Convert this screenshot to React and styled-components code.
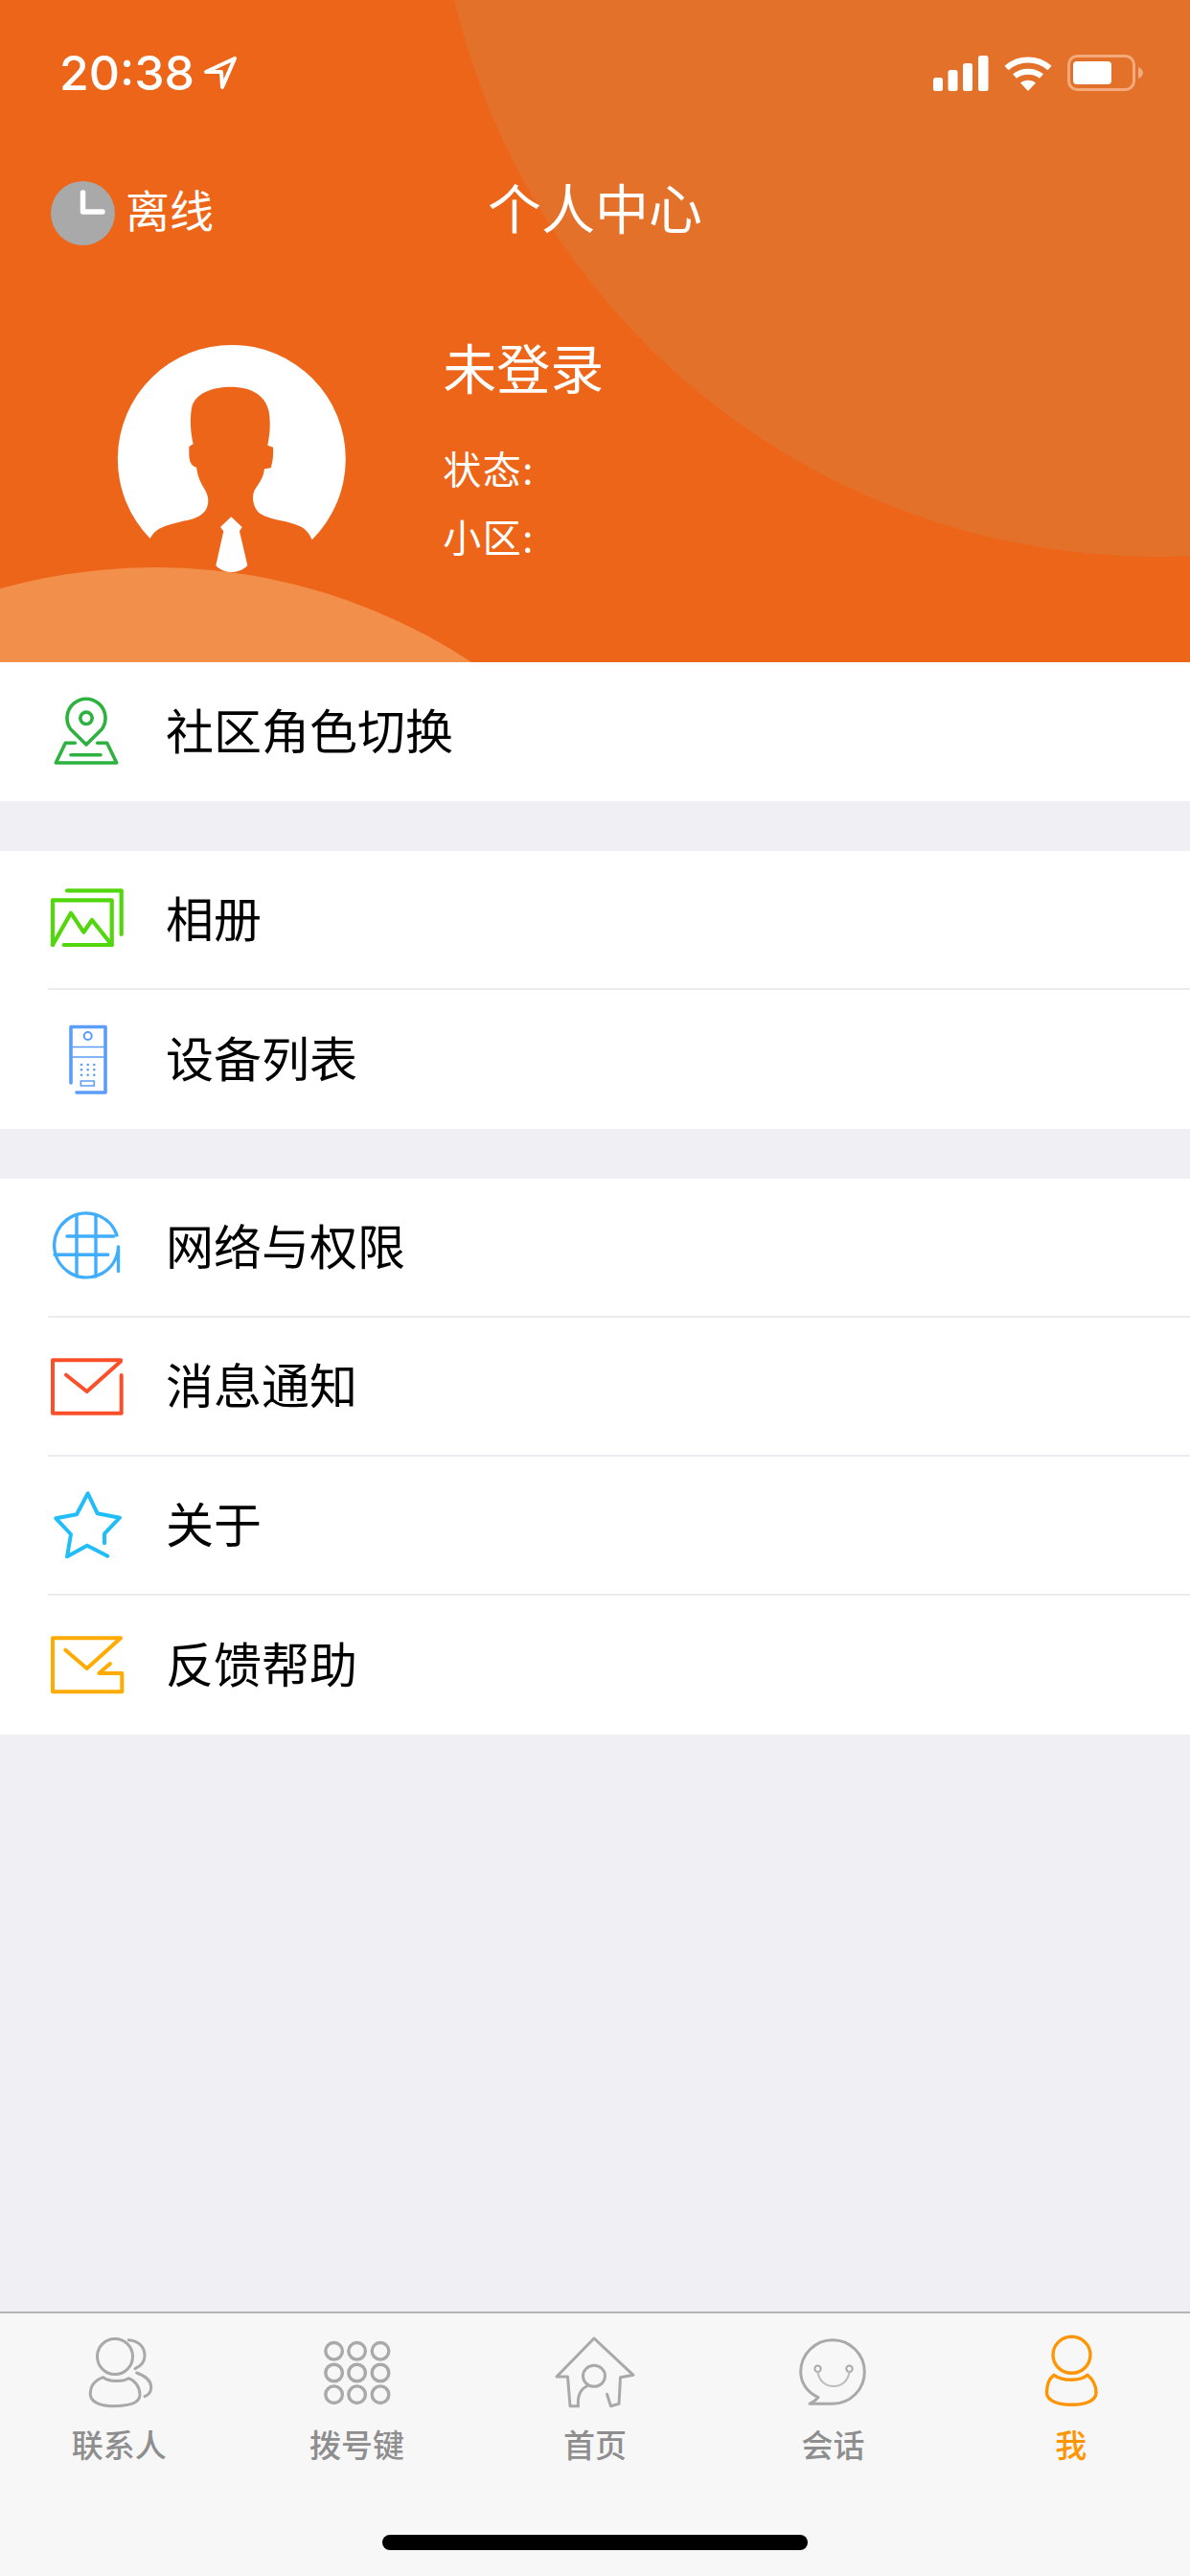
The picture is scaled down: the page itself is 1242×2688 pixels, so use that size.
import React from "react";
import styled, { createGlobalStyle } from "styled-components";

const Global = createGlobalStyle`
  html, body { margin: 0; padding: 0; background: #efeff4; }
  * { box-sizing: border-box; }
`;
const CJK = `"Noto Sans CJK SC", "Noto Sans", sans-serif`;

const Page = styled.div`
  width: 1242px; height: 2688px; display: flex; flex-direction: column;
  background: #efeff4; font-family: ${CJK}; position: relative; overflow: hidden;
`;
const Header = styled.header`
  position: relative; height: 691px; flex: none; background: #ed6519; overflow: hidden; color: #fff;
`;
const BigCircle = styled.div`
  position: absolute; left: 454px; top: -927px; width: 1508px; height: 1508px;
  border-radius: 50%; background: #e37129;
`;
const Hill = styled.div`
  position: absolute; left: -438px; top: 592px; width: 1200px; height: 1200px;
  border-radius: 50%; background: #f2904b;
`;
const StatusBar = styled.div`
  position: relative; height: 152px; display: flex; align-items: center; justify-content: space-between;
  padding: 0 49px 0 62px;
`;
const Time = styled.div`
  display: flex; align-items: center; gap: 10px;
  font: 500 50px "Inter", sans-serif;
`;
const StatusIcons = styled.div`
  display: flex; align-items: center; gap: 16px;
`;
const Nav = styled.div`
  position: relative; height: 140px; display: grid; grid-template-columns: 1fr auto 1fr;
  align-items: center; padding: 0 0 0 53px;
`;
const Presence = styled.div`
  display: flex; align-items: center; gap: 11px; font-size: 46px; line-height: 60px;
`;
const PresenceLabel = styled.span`
  margin-bottom: 10px;
`;
const Title = styled.h1`
  margin: 0 0 14px; font-size: 56px; font-weight: 400; line-height: 70px; padding-right: 53px;
`;
const Profile = styled.div`
  position: relative; display: flex; align-items: flex-start; gap: 99px; padding: 64px 0 0 120px;
`;
const Info = styled.div`
  display: flex; flex-direction: column; margin-top: -2px;
`;
const Name = styled.div`
  font-size: 56px; line-height: 56px; margin-bottom: 43px;
`;
const Meta = styled.div`
  font-size: 40px; line-height: 71px; letter-spacing: 1.5px;
`;
const Main = styled.main`
  flex: 1; display: flex; flex-direction: column; gap: 52px;
`;
const Group = styled.section`
  background: #fff;
`;
const Row = styled.div`
  height: 145px; margin-left: 50px; display: flex; align-items: center; gap: 43px;
  font-size: 50px; color: #000;
  &:not(:last-child) { border-bottom: 2px solid #ececee; }
`;
const RowLabel = styled.span`
  margin-bottom: 8px;
`;
const TabBar = styled.nav`
  height: 276px; flex: none; background: #f7f7f8; border-top: 2px solid #b4b4b6;
  display: grid; grid-template-columns: repeat(5, 1fr); padding-top: 22px;
`;
const Tab = styled.div`
  display: flex; flex-direction: column; align-items: center; gap: 14px;
  color: ${p => (p.$active ? "#ff9500" : "#8e8e8e")};
  font-size: 33px; line-height: 40px; font-weight: 500;
`;
const HomeBar = styled.div`
  position: absolute; left: 399px; bottom: 27px; width: 444px; height: 16px;
  border-radius: 8px; background: #000;
`;

const Ic = ({ color, w = 3.6, children, vb = "0 0 80 80", width = 80 }) => (
  <svg width={width} height="80" viewBox={vb} fill="none" stroke={color} strokeWidth={w}
    strokeLinecap="round" strokeLinejoin="round" style={{ flex: "none" }}>
    {children}
  </svg>
);

const IconCommunity = () => (
  <Ic color="#2db13f">
    <path d="M40 53 L23.800 37 A20 20 0 1 1 56.200 37 Z" />
    <circle cx="40" cy="25.3" r="6.2" />
    <path d="M28.3 51.3H18.3L8.3 72H71.7L61.7 51.3H51.7" />
    <path d="M24 63.7H55" />
  </Ic>
);
const IconAlbum = () => (
  <Ic color="#52d60c" w={4.2}>
    <path d="M20 9.3H76.7V55" />
    <path d="M5 66V19.3H66.7V66H16.7" />
    <path d="M5 66L24 32.7L37.3 52.7L46 40L66.7 66" />
  </Ic>
);
const IconDevice = () => (
  <Ic color="#5b9dfb" w={3.6}>
    <path d="M24 64V5.5H60V74H30" />
    <circle cx="41.7" cy="15" r="4" strokeWidth="2" />
    <path d="M24.5 26.5H59.5M26 37H58" strokeWidth="1.6" />
    <g fill="#5b9dfb" stroke="none">
      {[35, 41.7, 48.3].flatMap(x => [45, 50.3, 55.7].map(y => <circle key={x + "-" + y} cx={x} cy={y} r="1.3" />))}
    </g>
    <rect x="34.3" y="62" width="14" height="5" strokeWidth="1.6" />
  </Ic>
);
const IconGlobe = () => (
  <Ic color="#40aefc" w={3.4}>
    <path d="M72 27 A33.5 33.5 0 1 0 73 44 L73.5 39 V64.5" />
    <path d="M30 6.5V70M50 6.5V70M20 28H69M7 47.3H62.7" />
  </Ic>
);
const IconMail = () => (
  <Ic color="#fb4f2a" w={4}>
    <path d="M76.7 28V67.7H5V12.3H76" />
    <path d="M76 13.5L40.7 45L19 27.7" />
  </Ic>
);
const IconStar = () => (
  <Ic color="#21bdf9" w={4}>
    <path d="M59 58.3V48.3L75 31.7L51.7 27.3L41.7 6.3L30 28.3L8.3 32.3L24 49L20 72.3L41 60.7L62.3 71.7" />
  </Ic>
);
const IconFeedback = () => (
  <Ic color="#ffab00" w={4}>
    <path d="M65 38L53.3 48H77.3V67.3H5V11.3H76L40.7 43L18.3 23.7" />
  </Ic>
);

const TabContacts = () => (
  <Ic color="#a9a9a9" w={3} width={82} vb="-1 0 82 80">
    <circle cx="36" cy="23" r="18.5" />
    <path d="M50.3 5.7C62 7 67 14 67 22.3C67 28 63 33 57 35.7" />
    <path d="M23.7 44.7C14 48 10 55 10.3 63C11 71 22 74.7 33.7 74.7C48 74.7 62 72 62 63C62 55 57 48 50.3 45.7C44 49.5 30 49.5 23.7 44.7Z" />
    <path d="M58.7 40C67 43 73.7 48 73.7 55C73.7 59 71 63 67 64.7" />
  </Ic>
);
const TabKeypad = () => (
  <Ic color="#a9a9a9" w={3.4} width={82} vb="-0.6 0 82 80">
    {[16, 40, 64.4].flatMap(x => [17.3, 40, 62.7].map(y => <circle key={x + "-" + y} cx={x} cy={y} r="8.8" />))}
  </Ic>
);
const TabHome = () => (
  <Ic color="#a9a9a9" w={3} width={84} vb="-1 0 84 80">
    <path d="M23.5 74.7H15L12.5 44H1L40 4L81 42.3L67.5 44.7L66 72.3L57.5 74.7L53.5 62.3" />
    <ellipse cx="40" cy="43.3" rx="11.5" ry="11" />
    <path d="M32.5 54C26 57 22.5 63 23.5 74.7" />
  </Ic>
);
const TabChat = () => (
  <Ic color="#a9a9a9" w={3} width={82} vb="0 0 82 80">
    <path d="M17 72.3C21 70 24 68.5 26 65.5C14 60 7.7 50 7.7 39A33.3 33.3 0 1 1 41 72.3C35 72.3 30 72 17 72.3Z" />
    <circle cx="25.5" cy="35.7" r="3.2" strokeWidth="2" />
    <circle cx="58.5" cy="35.7" r="3.2" strokeWidth="2" />
    <path d="M25.5 39C27 49 34 54 42 54C50 54 57 49 58.5 39" strokeWidth="2" stroke="#bdbdbd" />
  </Ic>
);
const TabMe = () => (
  <Ic color="#ff9500" w={3.4} width={82} vb="0 0 82 80">
    <ellipse cx="41.5" cy="21.3" rx="19.5" ry="19" />
    <path d="M23 42.3C29 46.5 35 47.3 41.5 47.3C48 47.3 53 46.5 58 42.3C63 46 67 53 67 60.7C67 70 54 73.3 41.5 73.3C29 73.3 15.5 70 15.5 60.7C15.5 53 18 46 23 42.3Z" />
  </Ic>
);

const Avatar = () => (
  <svg width="243.3" height="243.3" viewBox="360 50 730 730" style={{ flex: "none" }}>
    <path fill="#fff" d="M470 668 A357 357 0 1 1 977 672 C970 655 960 640 940 630 C900 610 850 612 815 590 C795 575 785 540 798 515 C810 495 825 480 828 450 L848 447 C852 435 857 410 855 382 L838 376 C845 340 848 310 842 270 C830 215 780 193 722 193 C670 193 610 210 600 260 C595 290 595 330 605 372 L592 380 L592 400 C592 430 600 440 615 445 L620 470 C630 505 652 520 652 550 C650 590 620 604 580 612 C530 625 490 630 470 668 Z" />
    <path fill="#fff" d="M724 600 L758 632 L750 645 L775 752 C750 780 700 780 676 752 L700 645 L690 632 Z" />
  </svg>
);

const Row1 = [["社区角色切换", IconCommunity]];
const Row2 = [["相册", IconAlbum], ["设备列表", IconDevice]];
const Row3 = [["网络与权限", IconGlobe], ["消息通知", IconMail], ["关于", IconStar], ["反馈帮助", IconFeedback]];
const Tabs = [["联系人", TabContacts], ["拨号键", TabKeypad], ["首页", TabHome], ["会话", TabChat], ["我", TabMe, true]];

export default function App() {
  return (
    <Page>
      <Global />
      <Header>
        <BigCircle />
        <Hill />
        <StatusBar>
          <Time>
            20:38
            <svg width="34" height="34" viewBox="0 0 34 34" fill="none" stroke="#fff" strokeWidth="4" strokeLinejoin="round">
              <path d="M2 16L32 2L19 32L18 16Z" />
            </svg>
          </Time>
          <StatusIcons>
            <svg width="58" height="38" viewBox="0 0 58 38" fill="#fff">
              <rect x="0" y="24" width="10" height="14" rx="2.5" />
              <rect x="15.500" y="16" width="10" height="22" rx="2.500" />
              <rect x="31" y="9" width="10" height="29" rx="2.500" />
              <rect x="47" y="1" width="10.500" height="37" rx="2.500" />
            </svg>
            <svg width="50" height="38" viewBox="0 0 50 38" fill="none" stroke="#fff" strokeWidth="6">
              <path d="M2.500 14C15 2.500 35 2.500 47.500 14" />
              <path d="M11 22.500C18.500 16 31.500 16 39 22.500" />
              <path d="M25 38L17 29.500C21.500 25.800 28.500 25.800 33 29.500Z" fill="#fff" stroke="none" />
            </svg>
            <svg width="79" height="38" viewBox="0 0 79 38" fill="none">
              <rect x="1.500" y="1.500" width="68" height="35" rx="9" stroke="#f3ab7d" strokeWidth="3" />
              <rect x="6" y="7" width="40" height="24" rx="4" fill="#fff" />
              <path d="M74 13C77 14 79 16.500 79 19C79 21.500 77 24 74 25Z" fill="#f3ab7d" />
            </svg>
          </StatusIcons>
        </StatusBar>
        <Nav>
          <Presence>
            <svg width="67" height="67" viewBox="0 0 67 67" fill="none">
              <circle cx="33.500" cy="33.500" r="33.500" fill="#a9a9a9" />
              <path d="M33.500 12V32H54" stroke="#fff" strokeWidth="5.500" strokeLinecap="round" strokeLinejoin="round" />
            </svg>
            <PresenceLabel>离线</PresenceLabel>
          </Presence>
          <Title>个人中心</Title>
        </Nav>
        <Profile>
          <Avatar />
          <Info>
            <Name>未登录</Name>
            <Meta>状态:</Meta>
            <Meta>小区:</Meta>
          </Info>
        </Profile>
      </Header>
      <Main>
        {[Row1, Row2, Row3].map((g, i) => (
          <Group key={i}>
            {g.map(([t, I]) => (
              <Row key={t}><I /><RowLabel>{t}</RowLabel></Row>
            ))}
          </Group>
        ))}
      </Main>
      <TabBar>
        {Tabs.map(([t, I, a]) => (
          <Tab key={t} $active={a}><I />{t}</Tab>
        ))}
      </TabBar>
      <HomeBar />
    </Page>
  );
}
